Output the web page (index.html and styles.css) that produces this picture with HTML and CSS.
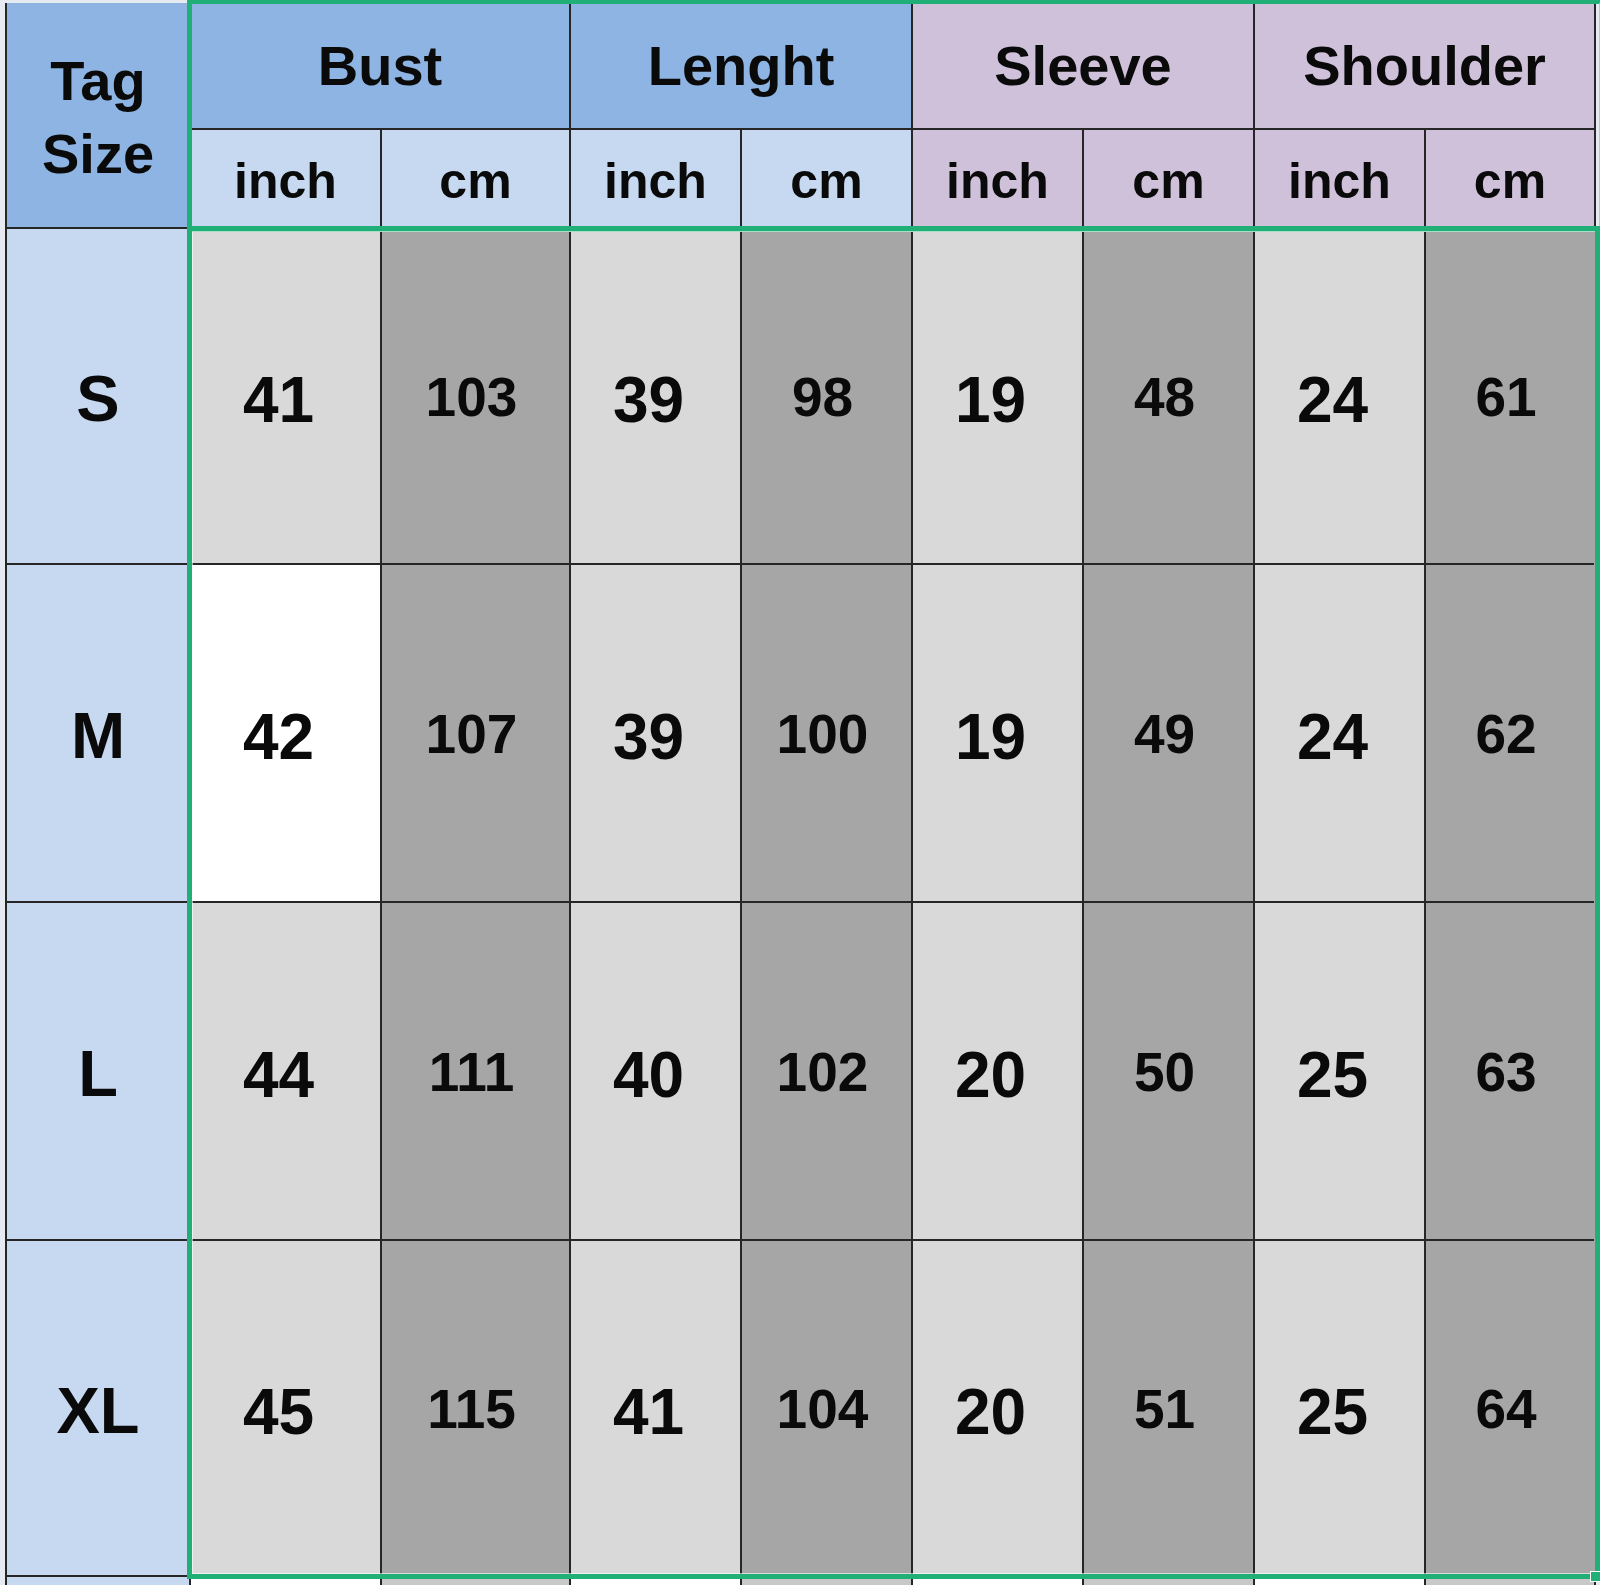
FILE: index.html
```html
<!DOCTYPE html>
<html>
<head>
<meta charset="utf-8">
<link rel="stylesheet" href="styles.css">
</head>
<body>
<div class="sheet">
  <div class="grid">
    <div class="cell tag-head">Tag<br>Size</div>
    <div class="cell grp blue span2">Bust</div>
    <div class="cell grp blue span2">Lenght</div>
    <div class="cell grp purple span2">Sleeve</div>
    <div class="cell grp purple span2">Shoulder</div>

    <div class="cell sub blue-l">inch</div>
    <div class="cell sub blue-l">cm</div>
    <div class="cell sub blue-l">inch</div>
    <div class="cell sub blue-l">cm</div>
    <div class="cell sub purple">inch</div>
    <div class="cell sub purple">cm</div>
    <div class="cell sub purple">inch</div>
    <div class="cell sub purple">cm</div>

    <div class="cell size">S</div>
    <div class="cell inch">41</div><div class="cell cm">103</div>
    <div class="cell inch">39</div><div class="cell cm">98</div>
    <div class="cell inch">19</div><div class="cell cm">48</div>
    <div class="cell inch">24</div><div class="cell cm">61</div>

    <div class="cell size">M</div>
    <div class="cell inch white">42</div><div class="cell cm">107</div>
    <div class="cell inch">39</div><div class="cell cm">100</div>
    <div class="cell inch">19</div><div class="cell cm">49</div>
    <div class="cell inch">24</div><div class="cell cm">62</div>

    <div class="cell size">L</div>
    <div class="cell inch">44</div><div class="cell cm">111</div>
    <div class="cell inch">40</div><div class="cell cm">102</div>
    <div class="cell inch">20</div><div class="cell cm">50</div>
    <div class="cell inch">25</div><div class="cell cm">63</div>

    <div class="cell size">XL</div>
    <div class="cell inch">45</div><div class="cell cm">115</div>
    <div class="cell inch">41</div><div class="cell cm">104</div>
    <div class="cell inch">20</div><div class="cell cm">51</div>
    <div class="cell inch">25</div><div class="cell cm">64</div>

    <div class="cell size"></div>
    <div class="cell tail-w"></div><div class="cell tail-g"></div>
    <div class="cell tail-w"></div><div class="cell tail-g"></div>
    <div class="cell tail-w"></div><div class="cell tail-g"></div>
    <div class="cell tail-w"></div><div class="cell tail-g"></div>
  </div>
  <div class="sel sel-head"></div>
  <div class="sel sel-data"><span class="handle"></span></div>
</div>
</body>
</html>
```

FILE: styles.css
```css
html, body {
  margin: 0;
  padding: 0;
  background: #ffffff;
  height: 1585px;
  overflow: hidden;
}

.sheet {
  position: relative;
  width: 1600px;
  height: 1585px;
  background: #e6ebf2;
}

.grid {
  position: relative;
  top: 3px;
  margin-left: 5px;
  width: 1587px;
  padding: 0 2px;
  display: grid;
  grid-template-columns: 182px 189px 187px 169px 169px 169px 169px 169px 168px;
  grid-template-rows: 125px 97px 334px 336px 336px 334px 20px;
  gap: 2px;
  background: #262626;
  font-family: "Liberation Sans", Arial, sans-serif;
  font-weight: bold;
  color: #0a0a0a;
}

.cell {
  display: flex;
  align-items: center;
  justify-content: center;
  text-align: center;
}

.tag-head {
  grid-row: span 2;
  background: #8db4e2;
  font-size: 56px;
  line-height: 73px;
  padding-top: 4px;
}

.span2 {
  grid-column: span 2;
}

.grp {
  font-size: 56px;
}

.sub {
  font-size: 50px;
  padding-top: 4px;
}

.blue {
  background: #8eb4e3;
}

.blue-l {
  background: #c6d9f1;
}

.purple {
  background: #d0c1db;
}

.size {
  background: #c6d9f1;
  font-size: 65px;
  padding-top: 5px;
}

.inch {
  background: #d9d9d9;
  font-size: 64px;
  padding-top: 7px;
  padding-right: 14px;
}

.cm {
  background: #a6a6a6;
  font-size: 55px;
  padding-top: 2px;
  padding-right: 8px;
}

.white {
  background: #ffffff;
}

.tail-w {
  background: #ffffff;
}

.tail-g {
  background: #c8c8c8;
}

.sel {
  position: absolute;
  box-sizing: border-box;
  border: 5px solid #20b077;
}

.sel-head {
  left: 187px;
  top: -1px;
  width: 1415px;
  height: 233px;
  border-right-color: #e3c766;
  border-right-width: 3px;
}

.sel-data {
  left: 187px;
  top: 226px;
  width: 1413px;
  height: 1353px;
  box-shadow: inset 0 0 0 1px rgba(255, 255, 255, 0.6);
}

.handle {
  position: absolute;
  right: -6px;
  bottom: -8px;
  width: 9px;
  height: 9px;
  background: #20b077;
  border: 1px solid #ffffff;
}
```
